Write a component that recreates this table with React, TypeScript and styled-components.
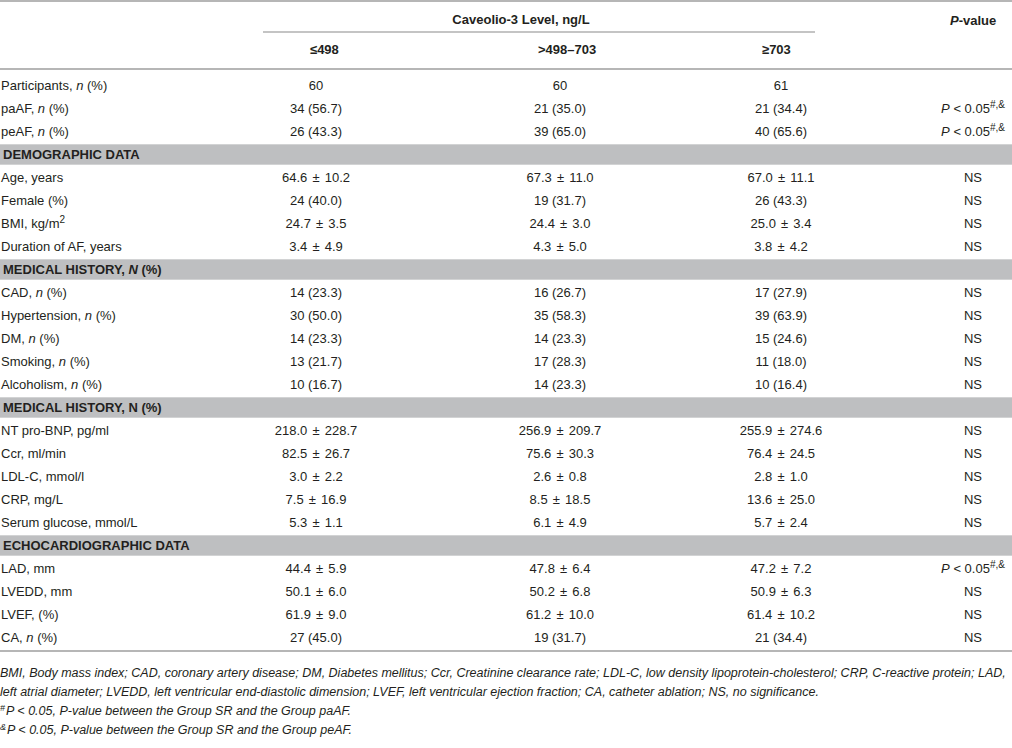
import React from "react";
import styled, { createGlobalStyle } from "styled-components";

const GlobalStyle = createGlobalStyle`
  html, body {
    margin: 0;
    padding: 0;
    background: #ffffff;
  }
  body {
    font-family: "Liberation Sans", Arial, sans-serif;
    color: #231f20;
  }
`;

const COLS = "194px 244px 244px 198px 1fr";

const Page = styled.div`
  width: 1012px;
  display: flex;
  flex-direction: column;
`;

const Table = styled.div`
  display: flex;
  flex-direction: column;
  border-top: 2px solid #b6b6b6;
  border-bottom: 2px solid #b6b6b6;
  font-size: 13px;
`;

const Head = styled.div`
  display: grid;
  grid-template-columns: ${COLS};
  grid-template-rows: 31px 35px;
  border-bottom: 2px solid #b6b6b6;
  font-weight: bold;
`;

const GroupTitle = styled.div`
  grid-column: 2 / 5;
  grid-row: 1;
  margin: 0 65px 0 69px;
  border-bottom: 2px solid #c4c4c4;
  display: flex;
  align-items: center;
  justify-content: center;
  padding-top: 6px;
  padding-right: 36px;
`;

const PHead = styled.div`
  grid-column: 5;
  grid-row: 1;
  display: flex;
  align-items: center;
  padding-top: 6px;
  padding-left: 70px;
`;

const SubHead = styled.div<{ $col: number; $indent: number }>`
  grid-column: ${(p) => p.$col};
  grid-row: 2;
  display: flex;
  align-items: center;
  padding-left: ${(p) => p.$indent}px;
  padding-bottom: 2px;
`;

const Body = styled.div`
  display: flex;
  flex-direction: column;
  padding: 4px 0 1px;
`;

const Row = styled.div`
  display: grid;
  grid-template-columns: ${COLS};
  height: 23px;
  align-items: center;
`;

const Label = styled.div`
  white-space: nowrap;
  padding-left: 1px;
`;

const Value = styled.div`
  text-align: center;
  white-space: nowrap;
`;

const PM = styled.span`
  margin: 0 1.5px;
`;

const PCell = styled.div`
  text-align: center;
  white-space: nowrap;
  padding-left: 54px;
`;

const Band = styled.div`
  height: 19px;
  margin: 1px 0;
  background: #bebfc1;
  border-top: 1px solid #d2d3d4;
  border-bottom: 1px solid #d2d3d4;
  font-weight: bold;
  display: flex;
  align-items: center;
  padding-left: 3px;
  white-space: nowrap;
`;

const I = styled.i`
  font-style: italic;
`;

const Sup = styled.sup`
  font-size: 10px;
  line-height: 0;
  vertical-align: 5px;
`;

const Notes = styled.div`
  display: flex;
  flex-direction: column;
  padding-top: 12px;
  font-size: 12.5px;
  font-style: italic;
`;

const NoteLine = styled.div`
  height: 19px;
  line-height: 19px;
  white-space: nowrap;
`;

const NoteSup = styled.sup`
  font-size: 9px;
  line-height: 0;
  vertical-align: 4px;
  margin-right: 1px;
`;

type DataRow = {
  kind: "row";
  label: React.ReactNode;
  values: [string, string, string];
  sig?: boolean;
  noP?: boolean;
};
type BandRow = { kind: "band"; title: React.ReactNode };

const n = <I>n</I>;
const SIG = (
  <>
    <I>P</I> &lt; 0.05<Sup>#,&amp;</Sup>
  </>
);

const renderValue = (v: string) => {
  const parts = v.split(" ± ");
  if (parts.length !== 2) return v;
  return (
    <>
      {parts[0]} <PM>±</PM> {parts[1]}
    </>
  );
};

const rows: (DataRow | BandRow)[] = [
  { kind: "row", label: <>Participants, {n} (%)</>, values: ["60", "60", "61"], noP: true },
  { kind: "row", label: <>paAF, {n} (%)</>, values: ["34 (56.7)", "21 (35.0)", "21 (34.4)"], sig: true },
  { kind: "row", label: <>peAF, {n} (%)</>, values: ["26 (43.3)", "39 (65.0)", "40 (65.6)"], sig: true },
  { kind: "band", title: "DEMOGRAPHIC DATA" },
  { kind: "row", label: "Age, years", values: ["64.6 ± 10.2", "67.3 ± 11.0", "67.0 ± 11.1"] },
  { kind: "row", label: "Female (%)", values: ["24 (40.0)", "19 (31.7)", "26 (43.3)"] },
  {
    kind: "row",
    label: (
      <>
        BMI, kg/m<Sup>2</Sup>
      </>
    ),
    values: ["24.7 ± 3.5", "24.4 ± 3.0", "25.0 ± 3.4"],
  },
  { kind: "row", label: "Duration of AF, years", values: ["3.4 ± 4.9", "4.3 ± 5.0", "3.8 ± 4.2"] },
  {
    kind: "band",
    title: (
      <>
        MEDICAL HISTORY, <I>N</I> (%)
      </>
    ),
  },
  { kind: "row", label: <>CAD, {n} (%)</>, values: ["14 (23.3)", "16 (26.7)", "17 (27.9)"] },
  { kind: "row", label: <>Hypertension, {n} (%)</>, values: ["30 (50.0)", "35 (58.3)", "39 (63.9)"] },
  { kind: "row", label: <>DM, {n} (%)</>, values: ["14 (23.3)", "14 (23.3)", "15 (24.6)"] },
  { kind: "row", label: <>Smoking, {n} (%)</>, values: ["13 (21.7)", "17 (28.3)", "11 (18.0)"] },
  { kind: "row", label: <>Alcoholism, {n} (%)</>, values: ["10 (16.7)", "14 (23.3)", "10 (16.4)"] },
  { kind: "band", title: "MEDICAL HISTORY, N (%)" },
  { kind: "row", label: "NT pro-BNP, pg/ml", values: ["218.0 ± 228.7", "256.9 ± 209.7", "255.9 ± 274.6"] },
  { kind: "row", label: "Ccr, ml/min", values: ["82.5 ± 26.7", "75.6 ± 30.3", "76.4 ± 24.5"] },
  { kind: "row", label: "LDL-C, mmol/l", values: ["3.0 ± 2.2", "2.6 ± 0.8", "2.8 ± 1.0"] },
  { kind: "row", label: "CRP, mg/L", values: ["7.5 ± 16.9", "8.5 ± 18.5", "13.6 ± 25.0"] },
  { kind: "row", label: "Serum glucose, mmol/L", values: ["5.3 ± 1.1", "6.1 ± 4.9", "5.7 ± 2.4"] },
  { kind: "band", title: "ECHOCARDIOGRAPHIC DATA" },
  { kind: "row", label: "LAD, mm", values: ["44.4 ± 5.9", "47.8 ± 6.4", "47.2 ± 7.2"], sig: true },
  { kind: "row", label: "LVEDD, mm", values: ["50.1 ± 6.0", "50.2 ± 6.8", "50.9 ± 6.3"] },
  { kind: "row", label: "LVEF, (%)", values: ["61.9 ± 9.0", "61.2 ± 10.0", "61.4 ± 10.2"] },
  { kind: "row", label: <>CA, {n} (%)</>, values: ["27 (45.0)", "19 (31.7)", "21 (34.4)"] },
];

export default function App() {
  return (
    <Page>
      <GlobalStyle />
      <Table>
        <Head>
          <GroupTitle>Caveolio-3 Level, ng/L</GroupTitle>
          <PHead>
            <span>
              <I>P</I>-value
            </span>
          </PHead>
          <SubHead $col={2} $indent={116}>≤498</SubHead>
          <SubHead $col={3} $indent={100}>&gt;498–703</SubHead>
          <SubHead $col={4} $indent={80}>≥703</SubHead>
        </Head>
        <Body>
          {rows.map((r, i) =>
            r.kind === "band" ? (
              <Band key={i}>
                <span>{r.title}</span>
              </Band>
            ) : (
              <Row key={i}>
                <Label>{r.label}</Label>
                {r.values.map((v, j) => (
                  <Value key={j}>{renderValue(v)}</Value>
                ))}
                <PCell>{r.noP ? "" : r.sig ? SIG : "NS"}</PCell>
              </Row>
            )
          )}
        </Body>
      </Table>
      <Notes>
        <NoteLine>
          BMI, Body mass index; CAD, coronary artery disease; DM, Diabetes mellitus; Ccr, Creatinine clearance rate; LDL-C, low density lipoprotein-cholesterol; CRP, C-reactive protein; LAD,
        </NoteLine>
        <NoteLine>
          left atrial diameter; LVEDD, left ventricular end-diastolic dimension; LVEF, left ventricular ejection fraction; CA, catheter ablation; NS, no significance.
        </NoteLine>
        <NoteLine>
          <NoteSup>#</NoteSup>P &lt; 0.05, P-value between the Group SR and the Group paAF.
        </NoteLine>
        <NoteLine>
          <NoteSup>&amp;</NoteSup>P &lt; 0.05, P-value between the Group SR and the Group peAF.
        </NoteLine>
      </Notes>
    </Page>
  );
}
